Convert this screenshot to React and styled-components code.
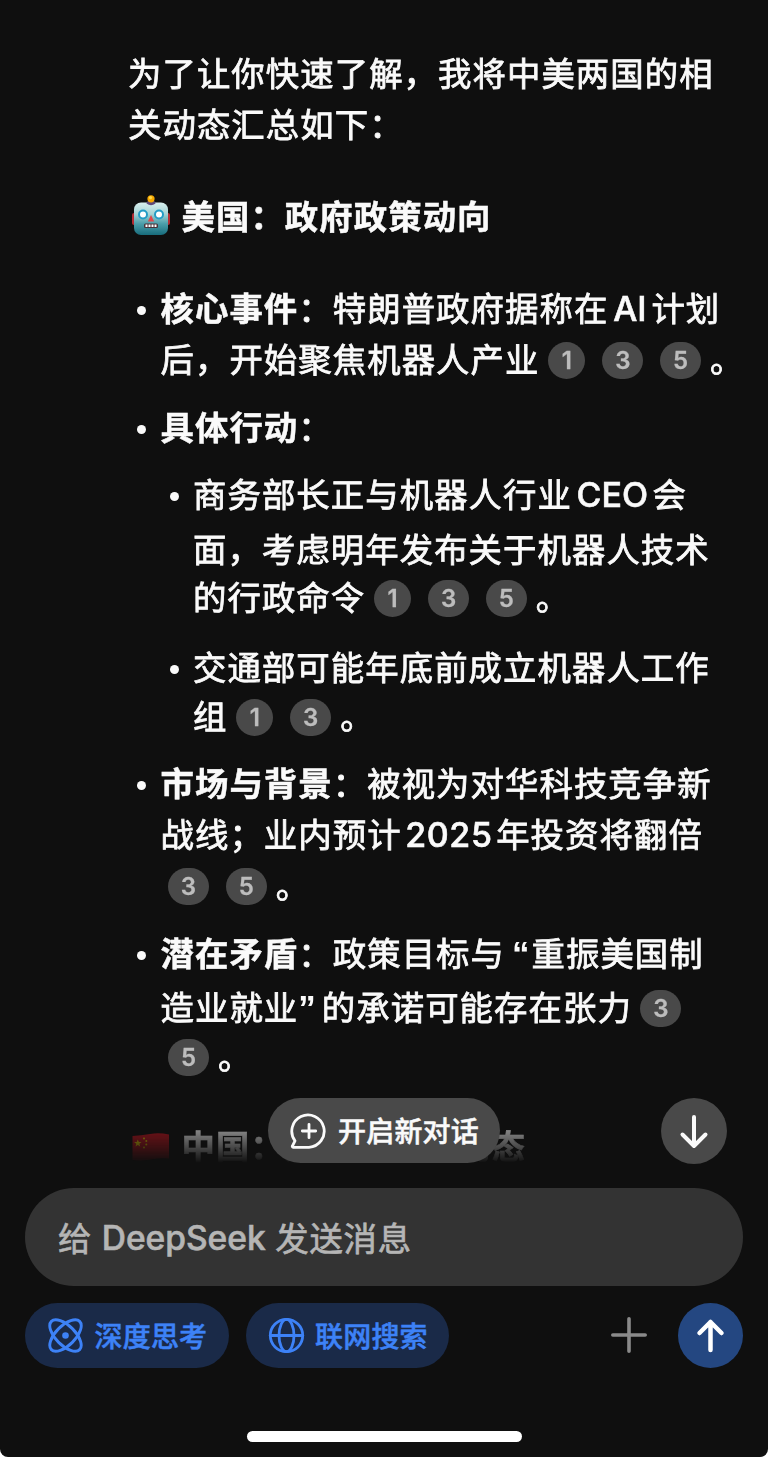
import React from "react";
import styled, { createGlobalStyle } from "styled-components";

const GlobalStyle = createGlobalStyle`
  * { box-sizing: border-box; }
  body {
    margin: 0;
    background: #fff;
    font-family: "Noto Sans CJK SC", sans-serif;
    -webkit-font-smoothing: antialiased;
  }
  button { border: 0; padding: 0; font: inherit; color: inherit; }
`;

const Screen = styled.div`
  position: relative;
  display: flex;
  flex-direction: column;
  width: 768px;
  height: 1457px;
  overflow: hidden;
  background: #0f0f0f;
  border-radius: 0 0 8px 8px;
  color: #fafafa;
`;

const Conversation = styled.main`
  height: 1163px;
  padding: 48px 0 0 128px;
  overflow: hidden;
  mask-image: linear-gradient(to bottom, #000 1098px, transparent 1163px);
`;

const Line = styled.div`
  display: flex;
  align-items: center;
  position: relative;
  height: 48px;
  margin-top: ${(p) => p.$gap || 0}px;
  padding-left: ${(p) => (p.$level || 0) * 32.5}px;
  font-size: 33.4px;
  letter-spacing: 1.06px;
  line-height: 48px;
  white-space: nowrap;
`;

const Text = styled.span`
  font-weight: 400;
  -webkit-text-stroke: 0.8px currentColor;
`;

const Strong = styled.strong`
  font-weight: 700;
  -webkit-text-stroke: 0.5px currentColor;
`;

const Latin = styled.span`
  width: ${(p) => p.$w}px;
  padding-top: 3px;
  text-align: center;
  font-family: Inter, sans-serif;
  font-size: ${(p) => p.$size || 34}px;
  font-weight: 500;
  letter-spacing: ${(p) => p.$spacing || 0}px;
  -webkit-text-stroke: 0.6px currentColor;
`;

const Quote = styled.span`
  width: ${(p) => p.$w}px;
  text-align: ${(p) => p.$align};
  font-family: "Liberation Sans", sans-serif;
  font-size: 35px;
  font-weight: 700;
  letter-spacing: 0;
  padding: 4px 2px 0 0;
`;

const Bullet = styled.span`
  width: 9px;
  height: 9px;
  margin: 7px 14.5px 0 -23.5px;
  border-radius: 50%;
  background: #fafafa;
`;

const Cite = styled.span`
  display: flex;
  align-items: center;
  justify-content: center;
  width: ${(p) => (p.$n === "1" ? 37.5 : 41)}px;
  height: 37px;
  border-radius: 19px;
  background: #494949;
  color: #bdbdbd;
  font: 600 24px/37px Inter, sans-serif;
  letter-spacing: 0;
  -webkit-text-stroke: 0.3px currentColor;
`;

const CiteGroup = styled.span`
  display: flex;
  gap: 16.8px;
  margin: 5px 9px 0 ${(p) => (p.$start ? 7.5 : 8.5)}px;
`;

const Emoji = styled.svg`
  width: 40px;
  height: 42px;
  margin: 0 11px 0 2.5px;
`;

const FloatingPill = styled.button`
  position: absolute;
  left: 268px;
  top: 1098px;
  display: flex;
  align-items: center;
  width: 232px;
  height: 65px;
  padding-left: 22px;
  gap: 10px;
  border-radius: 33px;
  background: #494949;
  color: #fafafa;
  font-size: 28px;
  letter-spacing: 0.2px;
`;

const Label = styled.span`
  font-weight: 500;
  margin-top: -1px;
  white-space: nowrap;
  -webkit-text-stroke: 0.5px currentColor;
`;

const ScrollDown = styled.button`
  position: absolute;
  left: 661px;
  top: 1098px;
  display: flex;
  width: 66px;
  height: 66px;
  border-radius: 50%;
  background: #494949;
`;

const Composer = styled.footer`
  display: flex;
  flex-direction: column;
  padding: 25px 25px 0;
`;

const Input = styled.div`
  display: flex;
  align-items: center;
  height: 98px;
  padding: 0 0 2px 33px;
  border-radius: 49px;
  background: #333;
  color: #b5b5b5;
  font-size: 33.4px;
  letter-spacing: 0.8px;
  white-space: nowrap;
`;

const Placeholder = styled.span`
  -webkit-text-stroke: 0.7px currentColor;
`;

const Tools = styled.div`
  display: flex;
  align-items: center;
  gap: 17px;
  height: 65px;
  margin-top: 16.5px;
`;

const Chip = styled.button`
  display: flex;
  align-items: center;
  gap: 10.5px;
  width: 203.5px;
  height: 65px;
  padding-left: 22px;
  border-radius: 33px;
  background: #1a2a48;
  color: #3d82f7;
  font-size: 28px;
  letter-spacing: 0.2px;
`;

const AddButton = styled.button`
  display: flex;
  margin-left: auto;
  margin-right: 14.5px;
  background: none;
  color: #8a8a8a;
`;

const Send = styled.button`
  display: flex;
  width: 65px;
  height: 65px;
  border-radius: 50%;
  background: #244781;
`;

const HomeIndicator = styled.div`
  width: 274.5px;
  height: 11px;
  margin: 63px auto 0 222px;
  border-radius: 6px;
  background: #fff;
`;

function Robot() {
  return (
    <Emoji viewBox="0 0 40 42">
      <defs>
        <linearGradient id="face" x1="0" y1="0" x2="0" y2="1">
          <stop offset="0" stopColor="#d9efee" />
          <stop offset="0.35" stopColor="#a4d3d5" />
          <stop offset="0.65" stopColor="#4c9eaa" />
          <stop offset="1" stopColor="#176c7c" />
        </linearGradient>
      </defs>
      <rect x="1" y="19" width="5" height="12" rx="2" fill="#b52b33" />
      <rect x="34" y="19" width="5" height="12" rx="2" fill="#b52b33" />
      <rect x="3" y="8.5" width="34" height="32.5" rx="7" fill="url(#face)" />
      <path d="M15.500 9.500Q16 6 20 6t4.500 3.500Q20 13 15.500 9.500Z" fill="#5f4a78" />
      <circle cx="20" cy="4.800" r="3.600" fill="#f6a800" />
      <circle cx="19.500" cy="3.600" r="1.600" fill="#ffd84a" />
      <circle cx="12" cy="20.500" r="4" fill="#fff" stroke="#239cc6" strokeWidth="2" />
      <circle cx="28" cy="20.500" r="4" fill="#fff" stroke="#239cc6" strokeWidth="2" />
      <path d="M20 21l3.200 6.500h-6.400Z" fill="#e0474c" />
      <rect x="13" y="29.500" width="14" height="4.500" rx="1.500" fill="#4a3238" />
      <path d="M14.500 31.700h11" stroke="#fff" strokeWidth="2.400" strokeDasharray="2 1" />
    </Emoji>
  );
}

function Flag() {
  return (
    <Emoji viewBox="0 0 40 42">
      <path d="M1.500 12Q10 11.500 19 10T38 10.500v24Q29 33.500 20 35.500T1.500 36Z" fill="#c9141f" />
      <path d="M6.800 15.500l1 2.500 2.700.1-2.100 1.700.8 2.600-2.400-1.500-2.300 1.500.8-2.600-2.200-1.700 2.700-.1Z" fill="#ffde00" />
      <g fill="#ffde00">
        <circle cx="13" cy="14.500" r="1" />
        <circle cx="15.300" cy="17" r="1" />
        <circle cx="15.300" cy="20.500" r="1" />
        <circle cx="13" cy="23.500" r="1" />
      </g>
    </Emoji>
  );
}

const stroke = { fill: "none", stroke: "currentColor", strokeLinecap: "round", strokeLinejoin: "round" };

const NewChatIcon = () => (
  <svg width="38" height="38" viewBox="0 0 38 38" {...stroke} strokeWidth="2.800">
    <path d="M19 35.300H3.200c-.9 0-1.100-.8-.7-1.500L5 28.800A16.200 16.200 0 1 1 19 35.300Z" />
    <path d="M19 12.300v13.400M12.300 19h13.400" />
  </svg>
);

const AtomIcon = () => (
  <svg width="37" height="37" viewBox="0 0 37 37" {...stroke} strokeWidth="2.900">
    <ellipse cx="18.500" cy="18.500" rx="20" ry="9.700" transform="rotate(45 18.500 18.500)" />
    <ellipse cx="18.500" cy="18.500" rx="20" ry="9.700" transform="rotate(-45 18.500 18.500)" />
    <circle cx="18.500" cy="18.500" r="3.300" fill="currentColor" stroke="none" />
  </svg>
);

const GlobeIcon = () => (
  <svg width="37" height="37" viewBox="0 0 37 37" {...stroke} strokeWidth="2.800">
    <circle cx="18.500" cy="18.500" r="16.200" />
    <ellipse cx="18.500" cy="18.500" rx="7.500" ry="16.200" />
    <path d="M2.300 18.500h32.400" />
  </svg>
);

const Cites = ({ items, start }) => (
  <CiteGroup $start={start}>
    {items.map((n) => (
      <Cite key={n} $n={n}>{n}</Cite>
    ))}
  </CiteGroup>
);

export default function App() {
  return (
    <Screen>
      <GlobalStyle />
      <Conversation>
        <Line><Text>为了让你快速了解，我将中美两国的相</Text></Line>
        <Line $gap={3}><Text>关动态汇总如下：</Text></Line>

        <Line $gap={44}><Robot /><Strong>美国：政府政策动向</Strong></Line>

        <Line $gap={44} $level={1}>
          <Bullet /><Strong>核心事件</Strong><Text>：特朗普政府据称在</Text>
          <Latin $w={43}>AI</Latin><Text>计划</Text>
        </Line>
        <Line $gap={3} $level={1}>
          <Text>后，开始聚焦机器人产业</Text><Cites items={["1", "3", "5"]} /><Text>。</Text>
        </Line>

        <Line $gap={20} $level={1}><Bullet /><Strong>具体行动</Strong><Text>：</Text></Line>
        <Line $gap={19} $level={2}>
          <Bullet /><Text>商务部长正与机器人行业</Text><Latin $w={80.5}>CEO</Latin><Text>会</Text>
        </Line>
        <Line $gap={7} $level={2}><Text>面，考虑明年发布关于机器人技术</Text></Line>
        <Line $level={2}>
          <Text>的行政命令</Text><Cites items={["1", "3", "5"]} /><Text>。</Text>
        </Line>
        <Line $gap={22} $level={2}><Bullet /><Text>交通部可能年底前成立机器人工作</Text></Line>
        <Line $gap={1} $level={2}>
          <Text>组</Text><Cites items={["1", "3"]} /><Text>。</Text>
        </Line>

        <Line $gap={19} $level={1}>
          <Bullet /><Strong>市场与背景</Strong><Text>：被视为对华科技竞争新</Text>
        </Line>
        <Line $gap={3} $level={1}>
          <Text>战线；业内预计</Text><Latin $w={94.5} $spacing={0.6}>2025</Latin><Text>年投资将翻倍</Text>
        </Line>
        <Line $gap={3} $level={1}><Cites start items={["3", "5"]} /><Text>。</Text></Line>

        <Line $gap={20} $level={1}>
          <Bullet /><Strong>潜在矛盾</Strong><Text>：政策目标与</Text>
          <Quote $w={26.5} $align="right">“</Quote><Text>重振美国制</Text>
        </Line>
        <Line $gap={6} $level={1}>
          <Text>造业就业</Text><Quote $w={23.5} $align="left">”</Quote>
          <Text>的承诺可能存在张力</Text><Cites items={["3"]} />
        </Line>
        <Line $gap={1} $level={1}><Cites start items={["5"]} /><Text>。</Text></Line>

        <Line $gap={42}><Flag /><Strong>中国：产业与市场动态</Strong></Line>
      </Conversation>

      <FloatingPill><NewChatIcon /><Label>开启新对话</Label></FloatingPill>
      <ScrollDown aria-label="回到底部">
        <svg width="66" height="66" viewBox="0 0 66 66" {...stroke} strokeWidth="4">
          <path d="M33 19v29M21.500 36.500L33 48l11.500-11.500" />
        </svg>
      </ScrollDown>

      <Composer>
        <Input>
          <Placeholder>给</Placeholder>
          <Latin $w={183} $size={33.5}>DeepSeek</Latin>
          <Placeholder>发送消息</Placeholder>
        </Input>
        <Tools>
          <Chip><AtomIcon /><Label>深度思考</Label></Chip>
          <Chip><GlobeIcon /><Label>联网搜索</Label></Chip>
          <AddButton aria-label="添加">
            <svg width="36" height="36" viewBox="0 0 36 36" {...stroke} strokeWidth="3.600">
              <path d="M18 1.800v32.400M1.800 18h32.400" />
            </svg>
          </AddButton>
          <Send aria-label="发送">
            <svg width="65" height="65" viewBox="0 0 65 65" {...stroke} strokeWidth="4.500" color="#fff">
              <path d="M32.500 47V19M21.500 30L32.500 19l11 11" />
            </svg>
          </Send>
        </Tools>
        <HomeIndicator />
      </Composer>
    </Screen>
  );
}
